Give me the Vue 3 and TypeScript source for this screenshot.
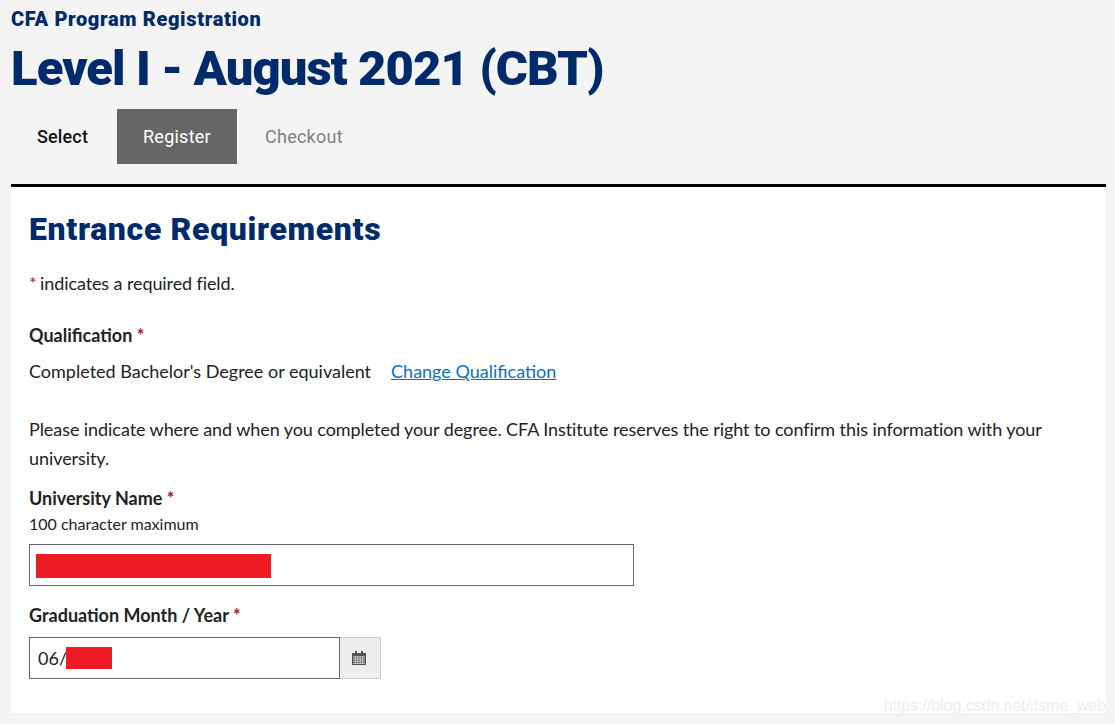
<script setup lang="ts">
const steps = [
  { label: "Select", state: "done" },
  { label: "Register", state: "active" },
  { label: "Checkout", state: "todo" },
]
</script>

<template>
  <div class="page">
    <p class="eyebrow">CFA Program Registration</p>
    <h1 class="title">Level I - August 2021 (CBT)</h1>
    <nav class="steps">
      <span v-for="s in steps" :key="s.label" class="step" :class="s.state">{{ s.label }}</span>
    </nav>
    <main class="card">
      <h2 class="card-title">Entrance Requirements</h2>
      <p class="note"><span class="req">*</span> indicates a required field.</p>
      <div class="label qual-label">Qualification <span class="req">*</span></div>
      <div class="qual">
        <span>Completed Bachelor's Degree or equivalent</span>
        <a class="link" href="#">Change Qualification</a>
      </div>
      <p class="intro">Please indicate where and when you completed your degree. CFA Institute reserves the right to confirm this information with your university.</p>
      <div class="label uni-label">University Name <span class="req">*</span></div>
      <div class="hint">100 character maximum</div>
      <div class="input wide"><span class="redact name"></span></div>
      <div class="label grad-label">Graduation Month / Year <span class="req">*</span></div>
      <div class="date">
        <div class="input narrow"><span class="typed">06/</span><span class="redact year"></span></div>
        <button class="cal" type="button" aria-label="Open calendar">
          <svg width="14" height="14" viewBox="0 0 14 14">
            <path d="M0 2h14v12H0z" fill="#555" />
            <path d="M3 0h2v3H3zM9 0h2v3H9z" fill="#555" />
            <path d="M1 5.8h12M1 8h12M1 10.2h12M1 12.4h12M3.4 5.4V13M5.8 5.4V13M8.2 5.4V13M10.6 5.4V13" stroke="#ddd" stroke-width=".8" fill="none" />
          </svg>
        </button>
      </div>
      <div class="mark">https://blog.csdn.net/itsme_web</div>
    </main>
  </div>
</template>

<style scoped>
.page {
  height: 724px;
  box-sizing: border-box;
  padding: 6px 9px 0 11px;
  overflow: hidden;
}
.eyebrow {
  margin: 0;
  height: 26px;
  font: 900 20px/26px Roboto, sans-serif;
  letter-spacing: 0.65px;
  color: #002b6b;
  white-space: nowrap;
}
.title {
  margin: 0;
  height: 54px;
  padding-top: 10px;
  font: 900 49px/54px Roboto, sans-serif;
  letter-spacing: -0.9px;
  color: #002b6b;
  white-space: nowrap;
}
.steps {
  display: flex;
  margin-top: 13px;
  height: 55px;
}
.step {
  display: flex;
  align-items: center;
  padding: 0 26px;
  font: 400 18px Roboto, sans-serif;
  letter-spacing: 0.25px;
}
.step.done {
  color: #111;
  font-weight: 500;
  letter-spacing: 0.15px;
  width: 106px;
  box-sizing: border-box;
}
.step.active {
  background: #666;
  color: #fff;
  width: 120px;
  box-sizing: border-box;
}
.step.todo {
  padding-left: 28px;
  color: #808080;
}
.card {
  position: relative;
  margin-top: 20px;
  height: 529px;
  box-sizing: border-box;
  border-top: 3px solid #000;
  background: #fff;
  padding: 0 18px;
  color: #222;
  font: 400 18px/29px Lato, sans-serif;
}
.card-title {
  margin: 0;
  padding-top: 23px;
  font: 900 32px/38px Roboto, sans-serif;
  letter-spacing: 0.65px;
  color: #002b6b;
  white-space: nowrap;
}
.note {
  margin: 21px 0 0;
  letter-spacing: -0.1px;
}
.note .req {
  margin-right: -1px;
}
.req {
  color: #a6192e;
}
.label {
  font-weight: 700;
  line-height: 24px;
}
.qual-label {
  margin-top: 25px;
}
.qual {
  display: flex;
  gap: 20px;
  margin-top: 10px;
}
.link {
  color: #0c6fc0;
}
.intro {
  margin: 29px 0 0;
  width: 1040px;
  letter-spacing: -0.07px;
}
.uni-label {
  margin-top: 13px;
}
.hint {
  margin-top: 4px;
  font-size: 16px;
  line-height: 20px;
}
.input {
  box-sizing: border-box;
  height: 42px;
  border: 1px solid #666;
  display: flex;
  align-items: center;
  padding-left: 8px;
}
.wide {
  width: 605px;
  margin-top: 10px;
  padding: 2px 0 0 6px;
}
.grad-label {
  margin-top: 17px;
}
.date {
  display: flex;
  margin-top: 10px;
}
.narrow {
  width: 311px;
}
.typed {
  margin-right: -1px;
}
.redact {
  display: block;
  background: #ed1c24;
}
.name {
  width: 235px;
  height: 24px;
}
.year {
  width: 46px;
  height: 22px;
}
.cal {
  width: 41px;
  height: 42px;
  padding: 0 3px 0 0;
  border: 1px solid #ccc;
  border-left: 0;
  background: #eee;
  display: flex;
  align-items: center;
  justify-content: center;
}
.mark {
  position: absolute;
  right: 0;
  bottom: -3px;
  font: 400 16px/20px "Liberation Sans", sans-serif;
  letter-spacing: -0.06px;
  color: #ededed;
}
</style>

<style>
body {
  background: #f4f4f4;
}
</style>
